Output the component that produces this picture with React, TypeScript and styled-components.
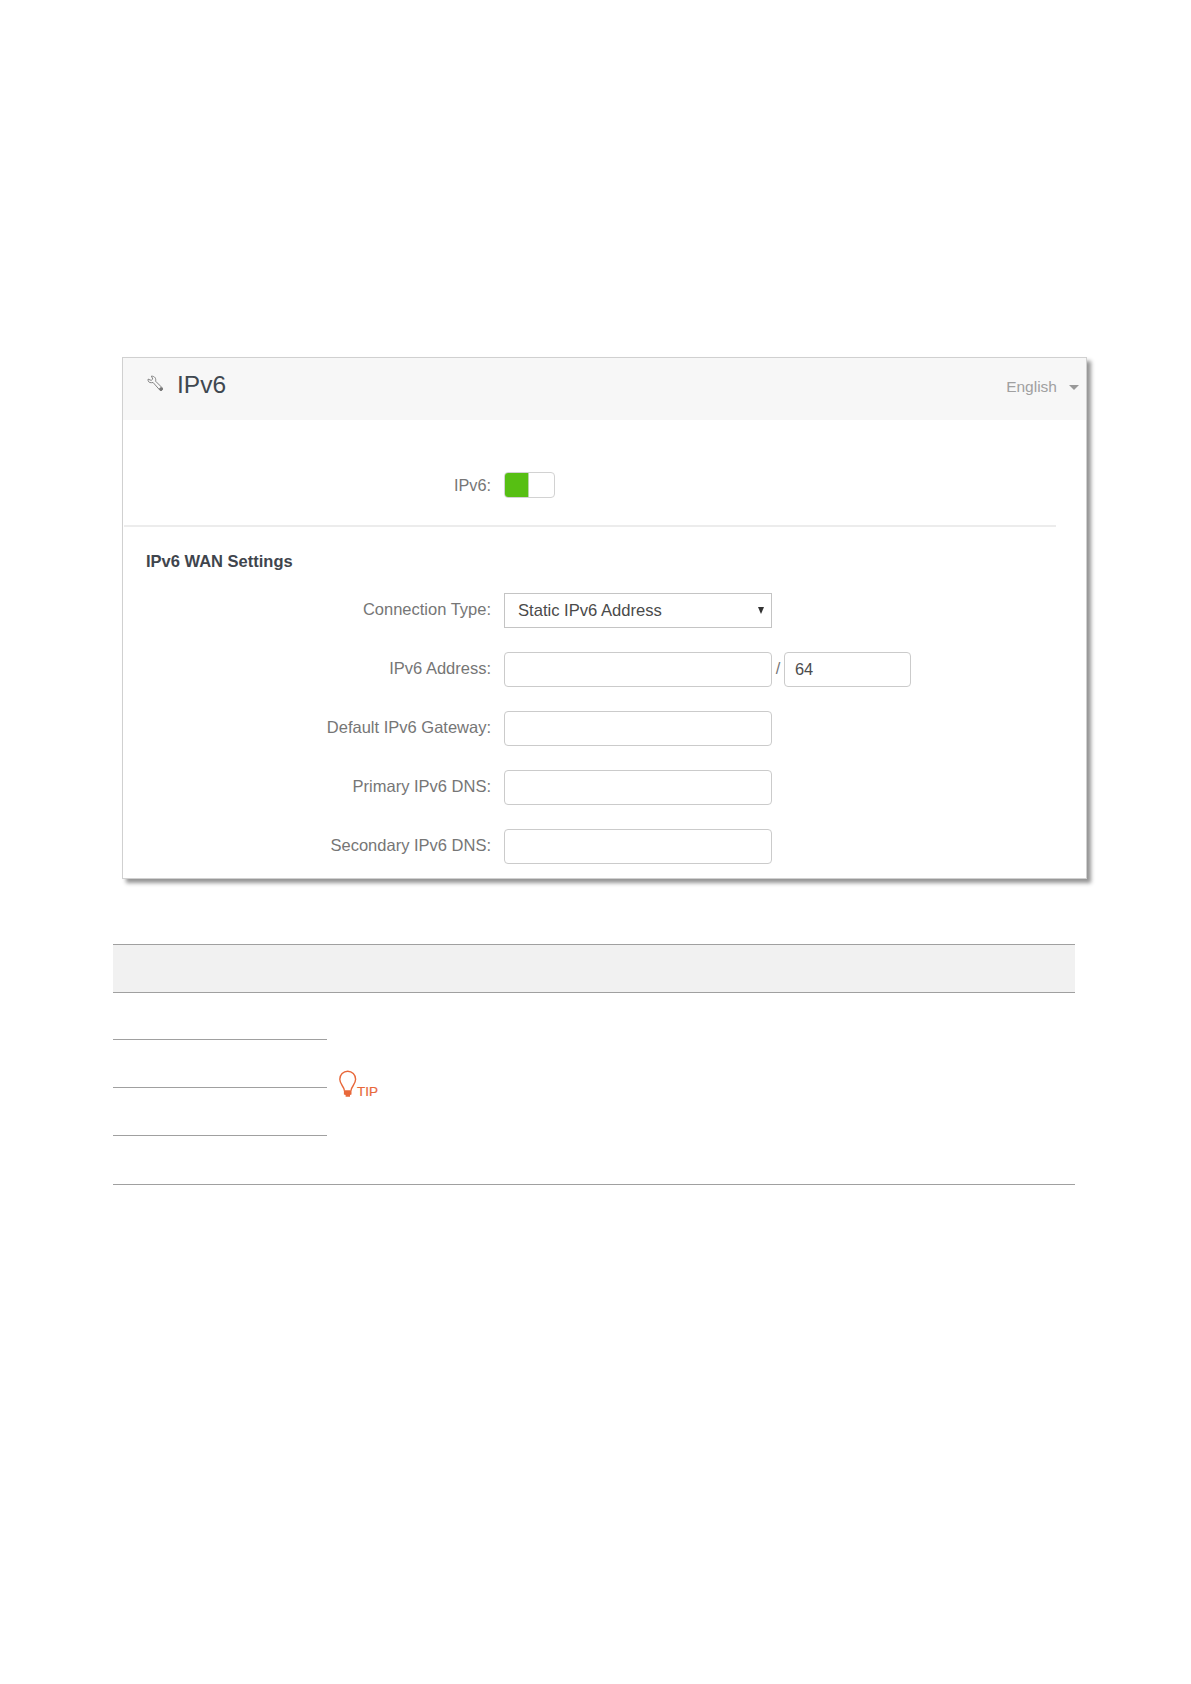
import React from "react";
import styled, { createGlobalStyle } from "styled-components";

const GlobalStyle = createGlobalStyle`
  *, *::before, *::after { box-sizing: border-box; }
  body {
    margin: 0;
    background: #fff;
    font-family: "Liberation Sans", Arial, sans-serif;
  }
`;

const Page = styled.main`
  width: 1191px;
  height: 1684px;
  padding: 357px 0 0 113px;
  overflow: hidden;
`;

const Panel = styled.section`
  width: 965px;
  height: 522px;
  margin-left: 9px;
  border: 1px solid #d0d0d0;
  background: #fff;
  box-shadow: 4px 4px 4px rgba(0, 0, 0, 0.42);
  font-size: 16.5px;
  color: #767676;
`;

const PanelHeader = styled.header`
  display: flex;
  align-items: flex-start;
  height: 62px;
  padding: 0 8px 0 24px;
  background: #f7f7f7;
`;

const WrenchIcon = styled.svg`
  width: 17px;
  height: 17px;
  margin-top: 17px;
`;

const Title = styled.h1`
  flex: 1;
  margin: 13px 0 0 13px;
  font-size: 24.5px;
  line-height: 28px;
  font-weight: 400;
  color: #3f4850;
`;

const LanguageMenu = styled.button`
  display: flex;
  align-items: center;
  gap: 12px;
  margin: 20px -1px 0 0;
  padding: 0;
  border: 0;
  background: none;
  font: 15.5px/18px "Liberation Sans", Arial, sans-serif;
  color: #a0a0a0;
`;

const Caret = styled.span`
  border: 5px solid transparent;
  border-top-color: #999;
  border-bottom: 0;
`;

const ToggleRow = styled.div`
  display: flex;
  height: 105px;
  padding-top: 52px;
`;

const Label = styled.label`
  width: 368px;
  margin-right: 13px;
  line-height: 33px;
  text-align: right;
  white-space: nowrap;
`;

const ToggleLabel = styled(Label)`
  font-size: 16.3px;
  line-height: 26px;
`;

const Toggle = styled.button`
  width: 51px;
  height: 26px;
  padding: 0;
  display: flex;
  border: 1px solid #d2d2d2;
  border-radius: 4px;
  background: #fff;
  overflow: hidden;

  &::before {
    content: "";
    width: 25px;
    height: 26px;
    margin: -1px 0 0 -1px;
    background: #57bf13;
    border-right: 1px solid #b9d6a8;
  }
`;

const Divider = styled.hr`
  width: 932px;
  height: 2px;
  margin: 0 0 0 1px;
  border: 0;
  background: #ececec;
`;

const SectionTitle = styled.h2`
  margin: 25px 0 0 23px;
  font-size: 16.5px;
  line-height: 18px;
  font-weight: 700;
  color: #3f454d;
`;

const Fields = styled.div`
  display: flex;
  flex-direction: column;
  gap: 24px;
  margin-top: 23px;
`;

const FieldRow = styled.div`
  display: flex;
  height: 35px;
`;

const Input = styled.input<{ $width: number }>`
  width: ${({ $width }) => $width}px;
  height: 35px;
  padding: 0 10px;
  border: 1px solid #cbcbcb;
  border-radius: 4px;
  background: #fff;
  font: 16.4px "Liberation Sans", Arial, sans-serif;
  color: #4c4c4c;
  outline: none;
`;

const Select = styled.button`
  display: flex;
  align-items: center;
  justify-content: space-between;
  width: 268px;
  height: 35px;
  padding: 0 7px 0 13px;
  border: 1px solid #c4c4c4;
  background: #fff;
  font: 16.6px "Liberation Sans", Arial, sans-serif;
  color: #4a4a4a;
`;

const SelectArrow = styled.span`
  border: 3.5px solid transparent;
  border-top: 7px solid #333;
  border-bottom: 0;
  margin-bottom: 1px;
`;

const Slash = styled.span`
  width: 12px;
  line-height: 32px;
  text-align: center;
`;

const ParameterTable = styled.section`
  display: grid;
  grid-template-columns: 214px 748px;
  grid-template-rows: 49px 47px 48px 48px 49px;
  width: 962px;
  margin-top: 65px;
`;

const TableHead = styled.div`
  grid-column: 1 / -1;
  border: solid #a0a0a0;
  border-width: 1px 0;
  background: #f1f1f1;
`;

const ParameterCell = styled.div`
  grid-column: 1;
  border-bottom: 1px solid #a0a0a0;
`;

const DescriptionCell = styled.div`
  grid-column: 2;
  grid-row: 2 / 6;
  padding: 77px 0 0 11px;
  border-bottom: 1px solid #a0a0a0;
`;

const Tip = styled.div`
  display: flex;
  align-items: flex-end;
  height: 28px;
  color: #e8683a;
`;

const BulbIcon = styled.svg`
  width: 19px;
  height: 28px;
`;

const TipText = styled.span`
  font-size: 13.5px;
  line-height: 13px;
  -webkit-text-stroke: 0.2px #e8683a;
`;

const textFields = [
  "Default IPv6 Gateway:",
  "Primary IPv6 DNS:",
  "Secondary IPv6 DNS:",
];

export default function App() {
  return (
    <>
      <GlobalStyle />
      <Page>
        <Panel>
          <PanelHeader>
            <WrenchIcon viewBox="0 0 17 17" fill="none" stroke="#777" strokeWidth="0.9" strokeLinejoin="round">
              <path d="M4.4 1.1 L5.8 4 L4.2 5.4 L1.1 4.1 C.7 6.4 2.1 7.9 4.4 7.7 L6.1 7.5 L12.8 15.1 C14.3 16.3 16.3 14.5 15.3 12.9 L8.6 6.2 C9.2 3.4 7.9 1.2 4.4 1.1 Z" />
              <circle cx="14" cy="14.1" r="1.4" fill="#777" />
            </WrenchIcon>
            <Title>IPv6</Title>
            <LanguageMenu>
              English
              <Caret />
            </LanguageMenu>
          </PanelHeader>
          <ToggleRow>
            <ToggleLabel>IPv6:</ToggleLabel>
            <Toggle role="switch" aria-checked="true" />
          </ToggleRow>
          <Divider />
          <SectionTitle>IPv6 WAN Settings</SectionTitle>
          <Fields>
            <FieldRow>
              <Label>Connection Type:</Label>
              <Select>
                Static IPv6 Address
                <SelectArrow />
              </Select>
            </FieldRow>
            <FieldRow>
              <Label>IPv6 Address:</Label>
              <Input $width={268} />
              <Slash>/</Slash>
              <Input $width={127} defaultValue="64" />
            </FieldRow>
            {textFields.map((name) => (
              <FieldRow key={name}>
                <Label>{name}</Label>
                <Input $width={268} />
              </FieldRow>
            ))}
          </Fields>
        </Panel>
        <ParameterTable>
          <TableHead />
          <ParameterCell />
          <ParameterCell />
          <ParameterCell />
          <ParameterCell />
          <DescriptionCell>
            <Tip>
              <BulbIcon viewBox="0 0 19 28" fill="none" stroke="currentColor">
                <path strokeWidth="1.4" d="M6.4 20.6 C6.2 16.5 1.8 14.5 1.8 9.3 A7.9 8.1 0 0 1 17.6 9.3 C17.6 14.5 13.2 16.5 13 20.6" />
                <path fill="currentColor" stroke="none" d="M5.9 20.3 H13.5 V24.4 L12 25 V26.8 H7.6 V25 L5.9 24.4 Z" />
              </BulbIcon>
              <TipText>TIP</TipText>
            </Tip>
          </DescriptionCell>
        </ParameterTable>
      </Page>
    </>
  );
}
